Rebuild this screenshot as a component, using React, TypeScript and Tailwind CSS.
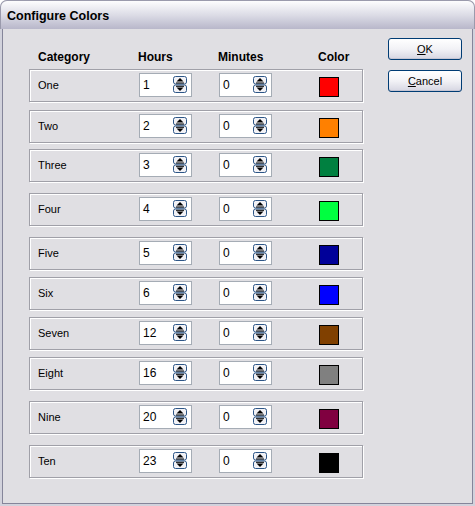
const rows = [
  { name: "One", hours: "1", color: "#ff0000", mt: "mt-0" },
  { name: "Two", hours: "2", color: "#ff8000", mt: "mt-[8px]" },
  { name: "Three", hours: "3", color: "#008040", mt: "mt-[6px]" },
  { name: "Four", hours: "4", color: "#00ff40", mt: "mt-[11px]" },
  { name: "Five", hours: "5", color: "#000099", mt: "mt-[11px]" },
  { name: "Six", hours: "6", color: "#0000ff", mt: "mt-[7px]" },
  { name: "Seven", hours: "12", color: "#804000", mt: "mt-[7px]" },
  { name: "Eight", hours: "16", color: "#808080", mt: "mt-[7px]" },
  { name: "Nine", hours: "20", color: "#800040", mt: "mt-[11px]" },
  { name: "Ten", hours: "23", color: "#000000", mt: "mt-[11px]" },
];

function Spinner() {
  return (
    <svg width="14" height="17" viewBox="0 0 14 17" className="block">
      <rect x="0.5" y="0.5" width="13" height="7.5" rx="2" fill="#f2f2f6" stroke="#2d5687" />
      <rect x="0.5" y="9" width="13" height="7.5" rx="2" fill="#f2f2f6" stroke="#2d5687" />
      <polygon points="3.5,5.5 10.5,5.5 7,2" fill="#000" />
      <rect x="3" y="6.5" width="8" height="1" fill="#000" />
      <rect x="3" y="9.8" width="8" height="1" fill="#000" />
      <polygon points="3.5,11.5 10.5,11.5 7,15" fill="#000" />
    </svg>
  );
}

function NumberBox({ value }: { value: string }) {
  return (
    <div className="flex h-[24px] w-[53px] items-start justify-between border border-[#a5acb5] bg-white pl-[3px] pr-[4px]">
      <span className="mt-[4px] text-[12px] leading-[14px] text-black">{value}</span>
      <div className="mt-[2px]">
        <Spinner />
      </div>
    </div>
  );
}

function XpButton({ label, hot }: { label: string; hot: string }) {
  return (
    <button className="flex h-[22px] w-[74px] items-center justify-center rounded-[3px] border border-[#003c74] bg-gradient-to-b from-white via-[#f2f2f6] to-[#d6d6e2] text-[11px] text-black shadow-[inset_0_-1px_0_#c5c5d3]">
      <span>
        <span className="underline">{hot}</span>
        {label.slice(hot.length)}
      </span>
    </button>
  );
}

export default function App() {
  return (
    <div className="h-[506px] w-[475px] overflow-hidden bg-white font-['Liberation_Sans',Arial,sans-serif]">
      <div className="flex h-full flex-col rounded-t-[7px] bg-[#d2d2dc]">
        <div className="flex h-[29px] items-center rounded-t-[7px] border border-b-0 border-[#9a9aac] bg-gradient-to-b from-[#fdfdfe] via-[#dcdce6] to-[#b8b7ca] pl-[6px] pt-[2px]">
          <span className="text-[12.5px] font-bold text-black">Configure Colors</span>
        </div>
        <div className="mx-[2px] mb-[2px] flex flex-1 border-x border-b border-[#85859a] bg-[#e0dfe3]">
          <div className="ml-[26px] flex w-[334px] flex-col pt-[20px]">
            <div className="flex h-[16px] items-center text-[12px] font-bold text-black">
              <span className="ml-[9px] w-[100px]">Category</span>
              <span className="w-[80px]">Hours</span>
              <span className="w-[100px]">Minutes</span>
              <span>Color</span>
            </div>
            <div className="mt-[4px] flex flex-col">
              {rows.map((r) => (
                <div
                  key={r.name}
                  className={`${r.mt} flex h-[33px] items-start border border-[#a0a0a8] shadow-[1px_1px_0_#ffffff,inset_1px_1px_0_#ffffff] pl-[8px]`}
                >
                  <span className="w-[101px] self-center text-[11px] text-black">{r.name}</span>
                  <div className="mt-[3px] w-[80px]">
                    <NumberBox value={r.hours} />
                  </div>
                  <div className="mt-[3px] w-[100px]">
                    <NumberBox value="0" />
                  </div>
                  <div
                    className="mt-[7px] h-[20px] w-[20px] border border-black"
                    style={{ backgroundColor: r.color }}
                  />
                </div>
              ))}
            </div>
          </div>
          <div className="ml-[25px] flex flex-col gap-[10px] pt-[9px]">
            <XpButton label="OK" hot="O" />
            <XpButton label="Cancel" hot="C" />
          </div>
        </div>
      </div>
    </div>
  );
}
